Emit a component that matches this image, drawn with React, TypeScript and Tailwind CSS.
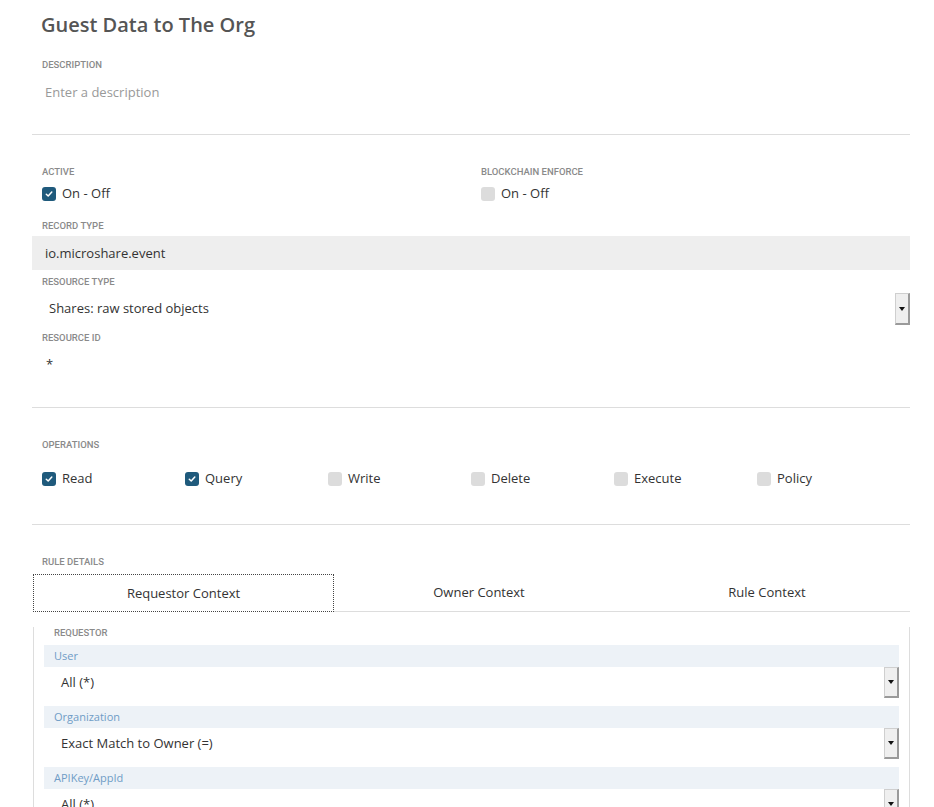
import React from "react";

const OS = { fontFamily: '"Open Sans", "Liberation Sans", sans-serif' };

function Label({ children, className = "" }: { children: React.ReactNode; className?: string }) {
  return (
    <div
      className={`h-[12px] text-[9.5px] leading-[12px] font-medium uppercase text-[#8a8a8a] ${className}`}
      style={{ fontFamily: 'Roboto, "Liberation Sans", sans-serif' }}
    >
      {children}
    </div>
  );
}

function Check({ checked, label }: { checked: boolean; label: string }) {
  return (
    <div className="flex items-center h-[20px]">
      {checked ? (
        <span className="w-[14px] h-[14px] rounded-[3px] bg-[#1f5a7c] flex items-center justify-center">
          <svg width="8" height="8" viewBox="0 0 8 8">
            <path d="M1.3 4.2 L3.2 6 L6.8 2" stroke="#fff" strokeWidth="1.5" fill="none" strokeLinecap="round" strokeLinejoin="round" />
          </svg>
        </span>
      ) : (
        <span className="w-[14px] h-[14px] rounded-[3px] bg-[#dcdcdc]" />
      )}
      <span className="ml-[6px] text-[13px] text-[#333]" style={OS}>
        {label}
      </span>
    </div>
  );
}

function SelBtn({ h = 31 }: { h?: number }) {
  return (
    <div
      className="w-[15px] flex items-center justify-center bg-[#efefef] border-t border-l border-t-[#cfcfcf] border-l-[#cfcfcf] border-r-2 border-b-2 border-r-[#9a9a9a] border-b-[#9a9a9a]"
      style={{ height: h }}
    >
      <svg width="6" height="4" viewBox="0 0 6 4">
        <path d="M0 0 L6 0 L3 4 Z" fill="#111" />
      </svg>
    </div>
  );
}

function Band({ title, value, last = false }: { title: string; value: string; last?: boolean }) {
  return (
    <div className={last ? "" : "mb-[8px]"}>
      <div className="h-[22px] bg-[#edf2f7] pl-[10px] flex items-center text-[11px] text-[#6f9cc6]" style={OS}>
        {title}
      </div>
      <div className="h-[31px] flex items-center justify-between pl-[17px]">
        <span className="text-[13px] text-[#333]" style={OS}>
          {value}
        </span>
        <SelBtn />
      </div>
    </div>
  );
}

export default function App() {
  return (
    <div className="w-[934px] h-[807px] overflow-hidden bg-white" style={OS}>
      <div className="ml-[32px] w-[878px]">
        <div className="pt-[11px] pl-[9px] h-[39px] text-[20px] leading-[28px] font-semibold text-[#555]">
          Guest Data to The Org
        </div>
        <Label className="mt-[20px] ml-[10px]">Description</Label>
        <div className="mt-[11px] ml-[13px] h-[20px] text-[13px] leading-[20px] text-[#999]">Enter a description</div>
        <div className="mt-[32px] border-t border-[#dddddd]" />

        <div className="mt-[31px] flex pl-[10px]">
          <div className="w-[439px]">
            <Label>Active</Label>
            <div className="mt-[6px]">
              <Check checked label="On - Off" />
            </div>
          </div>
          <div>
            <Label>Blockchain Enforce</Label>
            <div className="mt-[6px]">
              <Check checked={false} label="On - Off" />
            </div>
          </div>
        </div>

        <Label className="mt-[16px] ml-[10px]">Record Type</Label>
        <div className="mt-[4px] h-[34px] bg-[#eeeeee] flex items-center pl-[13px] pt-[2px] text-[13px] text-[#333]">
          io.microshare.event
        </div>

        <Label className="mt-[6px] ml-[10px]">Resource Type</Label>
        <div className="mt-[5px] h-[32px] flex items-center justify-between pl-[17px]">
          <span className="text-[13px] text-[#333]">Shares: raw stored objects</span>
          <SelBtn h={32} />
        </div>

        <Label className="mt-[7px] ml-[10px]">Resource ID</Label>
        <div className="mt-[10px] h-[20px] leading-[20px] pl-[14px] text-[13px] text-[#333]">*</div>

        <div className="mt-[33px] border-t border-[#dddddd]" />

        <Label className="mt-[31px] ml-[10px]">Operations</Label>
        <div className="mt-[18px] flex pl-[10px]">
          {[
            ["Read", true],
            ["Query", true],
            ["Write", false],
            ["Delete", false],
            ["Execute", false],
            ["Policy", false],
          ].map(([l, c]) => (
            <div key={l as string} className="w-[143px]">
              <Check checked={c as boolean} label={l as string} />
            </div>
          ))}
        </div>

        <div className="mt-[35px] border-t border-[#dddddd]" />

        <Label className="mt-[31px] ml-[10px]">Rule Details</Label>

        <div className="mt-[6px] ml-[1px] flex h-[38px]">
          <div className="w-[301px] border border-dotted border-[#444] flex items-center justify-center pt-[1px] text-[13px] text-[#333]">
            Requestor Context
          </div>
          <div className="w-[290px] border-b border-[#dddddd] flex items-center justify-center pt-[1px] text-[13px] text-[#333]">
            Owner Context
          </div>
          <div className="flex-1 border-b border-[#dddddd] flex items-center justify-center pt-[1px] text-[13px] text-[#333]">
            Rule Context
          </div>
        </div>

        <div className="ml-[1px] w-[877px] h-[300px] border-l border-r border-[#dddddd] px-[10px]">
          <Label className="mt-[15px] ml-[10px]">Requestor</Label>
          <div className="mt-[6px]">
            <Band title="User" value="All (*)" />
            <Band title="Organization" value="Exact Match to Owner (=)" />
            <Band title="APIKey/AppId" value="All (*)" last />
          </div>
        </div>
      </div>
    </div>
  );
}
